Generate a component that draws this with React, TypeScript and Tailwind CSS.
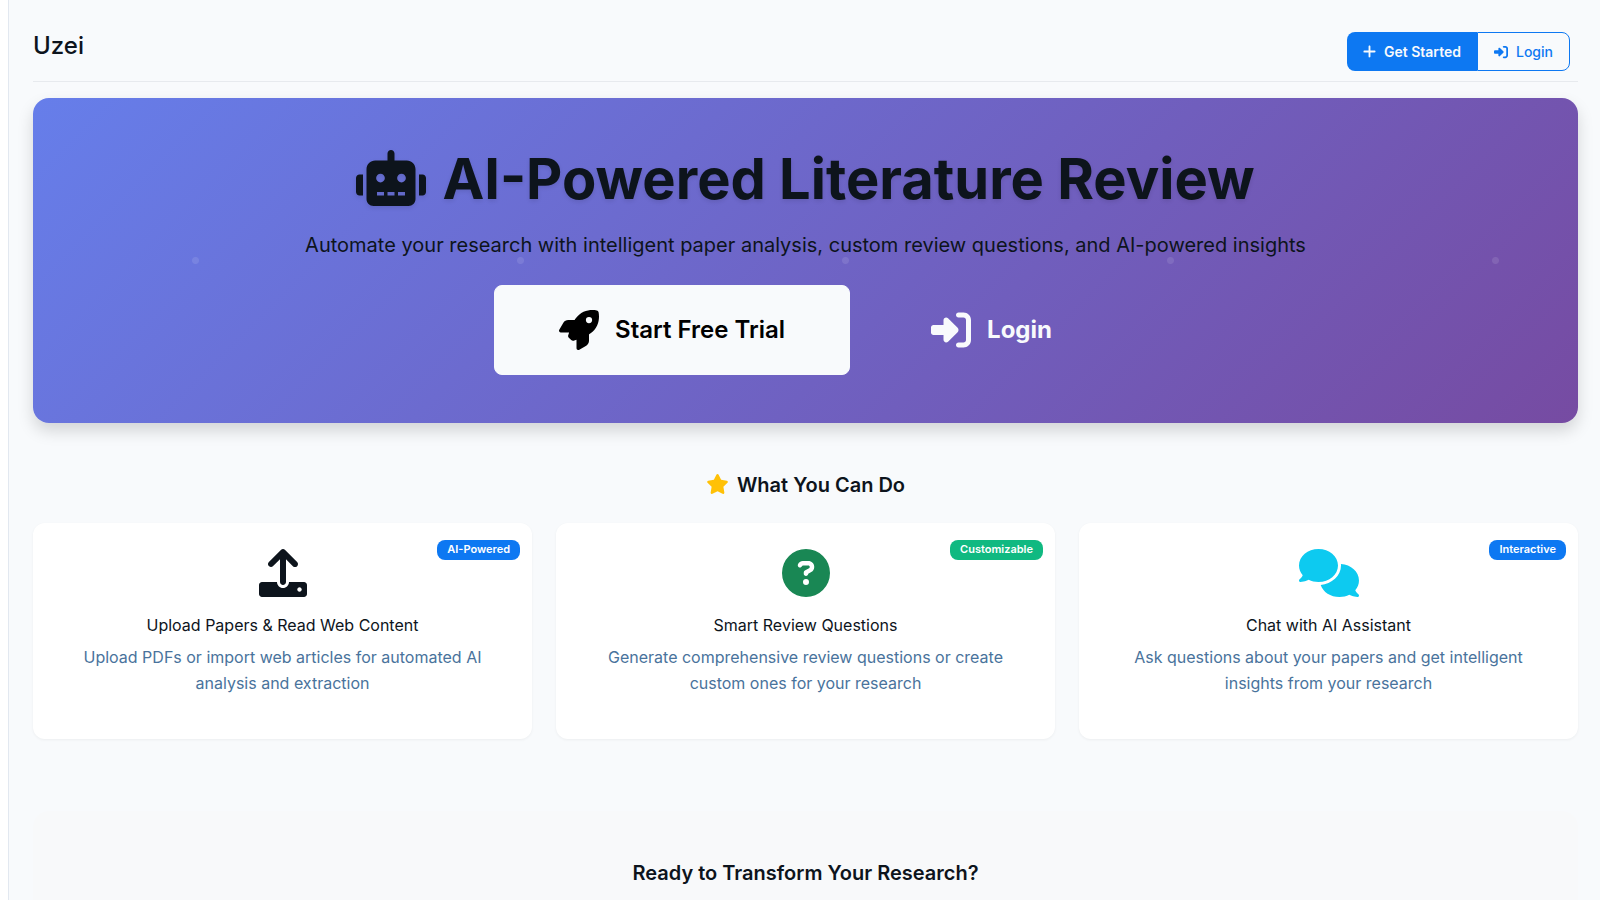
import type { ReactNode } from 'react'
import { FaCircleQuestion, FaComments, FaRightToBracket, FaRocket, FaStar } from 'react-icons/fa6'

interface Feature {
  title: string
  description: string
  badge: string
  badgeClass: string
  icon: ReactNode
}

function RobotIcon({ className }: { className?: string }) {
  return (
    <svg viewBox="0 0 640 512" fill="currentColor" className={className} aria-hidden="true">
      <path d="M32 224h32v192H32c-17.7 0-32-14.3-32-32V256c0-17.7 14.3-32 32-32zM544 176v272c0 35.300-28.700 64-64 64H160c-35.300 0-64-28.700-64-64V176c0-44.200 35.800-80 80-80h112V32c0-17.700 14.300-32 32-32s32 14.300 32 32v64h112c44.200 0 80 35.800 80 80zM264 256c0-22.100-17.900-40-40-40s-40 17.900-40 40 17.900 40 40 40 40-17.900 40-40zM256 384h-64v32h64v-32zM352 384h-64v32h64v-32zM456 256c0-22.100-17.900-40-40-40s-40 17.900-40 40 17.900 40 40 40 40-17.900 40-40zM448 384h-64v32h64v-32zM640 256v128c0 17.700-14.300 32-32 32h-32V224h32c17.700 0 32 14.300 32 32z" />
    </svg>
  )
}

function PlusIcon({ className }: { className?: string }) {
  return (
    <svg viewBox="0 0 448 512" fill="currentColor" className={className} aria-hidden="true">
      <path d="M432 256c0 17.700-14.300 32-32 32H256v144c0 17.700-14.300 32-32 32s-32-14.300-32-32V288H48c-17.700 0-32-14.300-32-32s14.300-32 32-32h144V80c0-17.700 14.300-32 32-32s32 14.300 32 32v144h144c17.700 0 32 14.300 32 32z" />
    </svg>
  )
}

function UploadIcon({ className }: { className?: string }) {
  return (
    <svg viewBox="0 0 512 512" fill="currentColor" className={className} aria-hidden="true">
      <path d="M105.400 182.600c12.500 12.500 32.800 12.500 45.300 0L224 109.300V352c0 17.700 14.300 32 32 32s32-14.300 32-32V109.300l73.400 73.400c12.500 12.500 32.700 12.500 45.200 0 12.500-12.500 12.500-32.800 0-45.300l-128-128C272.400 3.100 264.200 0 256 0s-16.400 3.100-22.600 9.400l-128 128c-12.500 12.500-12.500 32.700 0 45.200zM480 352H320c0 35.300-28.700 64-64 64s-64-28.700-64-64H32c-17.700 0-32 14.300-32 32v96c0 17.700 14.300 32 32 32h448c17.700 0 32-14.300 32-32v-96c0-17.700-14.300-32-32-32zM432 456c-13.200 0-24-10.800-24-24s10.800-24 24-24 24 10.800 24 24-10.800 24-24 24z" />
    </svg>
  )
}

const features: Feature[] = [
  {
    title: 'Upload Papers & Read Web Content',
    description: 'Upload PDFs or import web articles for automated AI analysis and extraction',
    badge: 'AI-Powered',
    badgeClass: 'bg-[#0d78f2]',
    icon: <UploadIcon className="size-12 text-[#0d141c]" />,
  },
  {
    title: 'Smart Review Questions',
    description: 'Generate comprehensive review questions or create custom ones for your research',
    badge: 'Customizable',
    badgeClass: 'bg-[#10b981]',
    icon: <FaCircleQuestion className="size-12 text-[#198754]" />,
  },
  {
    title: 'Chat with AI Assistant',
    description: 'Ask questions about your papers and get intelligent insights from your research',
    badge: 'Interactive',
    badgeClass: 'bg-[#0d78f2]',
    icon: <FaComments className="h-12 w-15 text-[#0dcaf0]" />,
  },
]

function Header() {
  return (
    <header className="flex items-start justify-between border-b border-[#e7eaee] pt-8 pr-2 pb-2.5">
      <h1 className="text-2xl font-medium leading-7">Uzei</h1>
      <div className="flex h-[39px] text-sm">
        <a
          href="#register"
          className="flex items-center gap-2 rounded-l-lg bg-[#0d78f2] px-4 font-semibold text-[#f8fafc]"
        >
          <PlusIcon className="h-[15px] w-[13px]" />
          Get Started
        </a>
        <a
          href="#login"
          className="flex items-center gap-2 rounded-r-lg border border-[#0d78f2] px-4 font-medium text-[#0d78f2]"
        >
          <FaRightToBracket />
          Login
        </a>
      </div>
    </header>
  )
}

function Hero() {
  return (
    <section className="mt-4 rounded-2xl bg-linear-[135deg,#667eea_0%,#764ba2_100%] shadow-[0_8px_16px_rgba(0,0,0,0.15)]">
      {/* Faint dots repeated across the banner */}
      <div className="bg-[radial-gradient(circle,rgba(255,255,255,0.1)_3px,transparent_4px)] bg-size-[325px_100%] px-12 py-12 text-center">
        <h2 className="flex items-center justify-center gap-4 text-[56px] font-bold leading-[67px] text-shadow-[0_2px_4px_rgba(0,0,0,0.1)]">
          <RobotIcon className="mb-1 h-14 w-[70px] drop-shadow-[0_2px_2px_rgba(0,0,0,0.1)]" />
          AI-Powered Literature Review
        </h2>
        <p className="mt-4 text-xl leading-8">
          Automate your research with intelligent paper analysis, custom review questions, and AI-powered insights
        </p>
        <div className="mt-6 flex justify-center gap-4 text-2xl">
          <a
            href="#register"
            className="flex h-[90px] items-center gap-4 rounded-lg border border-[#f8fafc] bg-[#f8fafc] px-16 font-semibold text-black"
          >
            <FaRocket className="size-10" />
            Start Free Trial
          </a>
          <a
            href="#login"
            className="flex h-[90px] items-center gap-4 rounded-lg border border-transparent px-16 font-bold text-[#f8fafc]"
          >
            <FaRightToBracket className="size-10" />
            Login
          </a>
        </div>
      </div>
    </section>
  )
}

function FeatureCard({ feature }: { feature: Feature }) {
  return (
    <article className="relative rounded-xl bg-white px-10 pt-[26px] pb-[43px] text-center shadow-[0_1px_3px_rgba(0,0,0,0.05)]">
      <span
        className={`absolute top-[17px] right-3 h-5 rounded-lg px-2.5 text-[11px] font-semibold leading-[18px] text-white ${feature.badgeClass}`}
      >
        {feature.badge}
      </span>
      <div className="flex justify-center">{feature.icon}</div>
      <h4 className="mt-4 text-base font-normal leading-6">{feature.title}</h4>
      <p className="mt-[7px] text-base leading-[26px] text-[#49739c]">{feature.description}</p>
    </article>
  )
}

export default function App() {
  return (
    <div className="flex min-h-screen bg-white font-['Inter',sans-serif] text-[#0d141c]">
      <aside className="w-[9px] shrink-0 border-r border-[#e2e8f0]" />
      <main className="h-screen min-w-0 flex-1 overflow-hidden bg-[#f8fafc] pr-[22px] pl-6">
        <Header />
        <Hero />

        <section className="mt-12">
          <h3 className="flex items-center justify-center gap-2 text-xl font-semibold leading-7">
            <FaStar className="mb-0.5 h-5 w-[23px] text-[#ffc107]" />
            What You Can Do
          </h3>
          <div className="mt-6 grid grid-cols-3 gap-6">
            {features.map(feature => (
              <FeatureCard key={feature.title} feature={feature} />
            ))}
          </div>
        </section>

        <section className="mt-[72px] rounded-2xl bg-[#f8f9fa] px-12 py-12 text-center">
          <h3 className="text-xl font-semibold leading-7">Ready to Transform Your Research?</h3>
        </section>
      </main>
    </div>
  )
}
